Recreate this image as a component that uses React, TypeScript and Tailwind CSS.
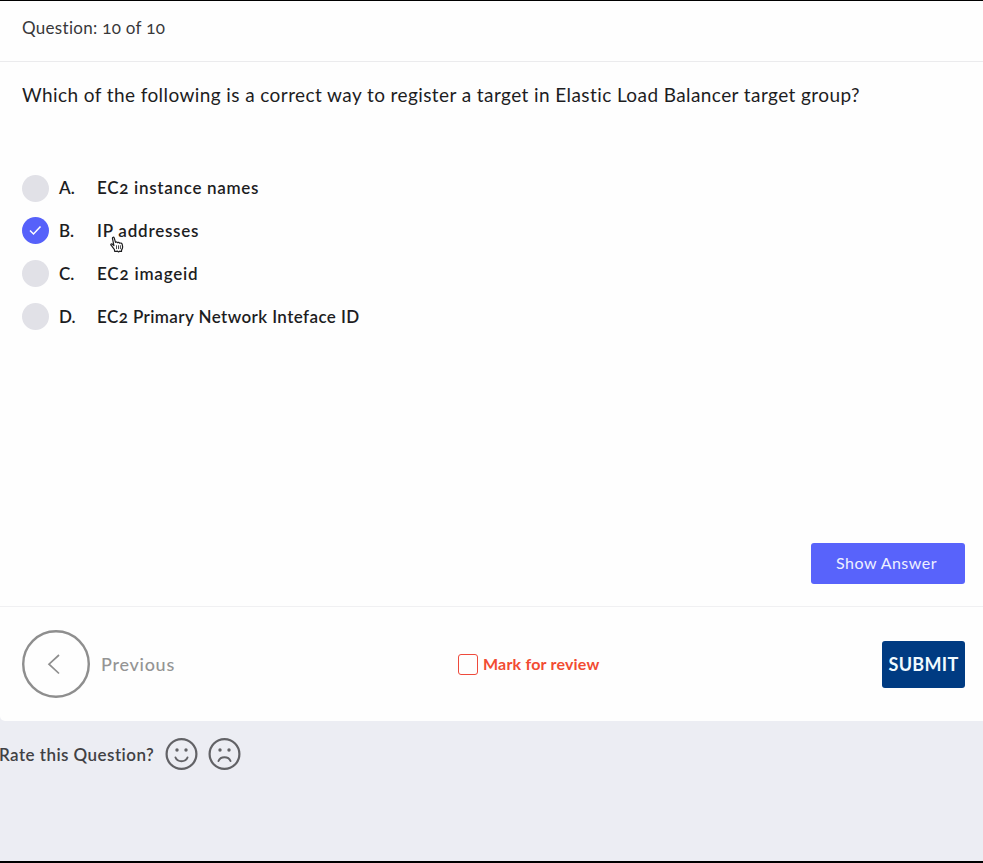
import type { ReactNode } from 'react';

const options = [
  { letter: 'A.', text: 'EC2 instance names', spacing: 'tracking-[0.7px]' },
  { letter: 'B.', text: 'IP addresses', spacing: 'tracking-[0.77px]' },
  { letter: 'C.', text: 'EC2 imageid', spacing: 'tracking-[0.8px]' },
  { letter: 'D.', text: 'EC2 Primary Network Inteface ID', spacing: 'tracking-[0.41px]' },
];

function PointerCursor() {
  return (
    <svg className="absolute left-[13px] top-[18px] h-[17px] w-[14px]" viewBox="0 0 14 17" fill="white" stroke="#1d1d1f" strokeWidth="1.2" strokeLinejoin="round" strokeLinecap="round">
      <path d="M4.8 15.5 4.3 13.4C3 12 2.2 10.5 1 9.2.4 8.2 1.6 7.5 2.5 8.2L3.9 9.5 2.5 2.6C2.2 1 3.8.7 4.3 2.1L5.5 6.3C6.2 5.7 7.2 6 7.5 6.7 8.3 6.1 9.3 6.4 9.6 7.2 10.5 6.7 12 7.1 12.2 8.4L12.6 10.7C12.8 12.1 12 13.1 11.6 14L11.5 15.5 9.7 15.1 8.6 16 7.3 15.1Z" />
      <path d="M6.5 9.7v3M8.5 9.7v3M10.4 9.7v3" strokeWidth=".8" />
    </svg>
  );
}

function Face({ children }: { children: ReactNode }) {
  return (
    <svg className="h-[33px] w-[33px]" viewBox="0 0 33 33" fill="none" stroke="#626266" strokeWidth="2" strokeLinecap="round">
      <circle cx="16.5" cy="16" r="14.9" strokeWidth="2.2" />
      <circle cx="12" cy="12" r="1.7" fill="#626266" stroke="none" />
      <circle cx="21" cy="12" r="1.7" fill="#626266" stroke="none" />
      {children}
    </svg>
  );
}

export default function App() {
  return (
    <div className="flex h-[863px] w-[983px] flex-col overflow-hidden border-b-2 border-t border-black bg-[#ecedf3] font-['Lato','Liberation_Sans',sans-serif] text-[#1d1d1f] oldstyle-nums">
      <main className="flex h-[720px] shrink-0 flex-col rounded-bl-[5px] bg-[#fefefe]">
        <header className="flex h-[61px] shrink-0 items-center border-b border-[#ebebed] pb-[6px] pl-[22px]">
          <span className="whitespace-nowrap text-[17px] leading-6 tracking-[0.3px] text-[#38383a]">Question: 10 of 10</span>
        </header>
        <section className="flex h-[545px] shrink-0 flex-col border-b border-[#f0f0f2] pl-[22px] pr-[18px]">
          <h1 className="mt-[19px] h-7 whitespace-nowrap text-[19px] leading-7 tracking-[0.41px]"><span>Which of the following is a correct way to register a target in Elastic Load Balancer target group?</span></h1>
          <div className="mt-[65.5px] flex flex-col gap-[15.8px]">
            {options.map((o) => (
              <div key={o.letter} className="flex h-[27px] items-center">
                <span className={`flex size-[27px] items-center justify-center rounded-full ${o.letter === 'B.' ? 'bg-[#5661fa]' : 'bg-[#e1e1e7]'}`}>
                  {o.letter === 'B.' && (
                    <svg className="h-[11px] w-[13px]" viewBox="0 0 13 11" fill="none" stroke="white" strokeWidth="1.5"><path d="M1 5.5 4.5 9 11.5 1.5" /></svg>
                  )}
                </span>
                <span className="ml-[10px] w-[38px] text-[17px] font-semibold">{o.letter}</span>
                <span className="relative">
                  <span className={`whitespace-nowrap text-[17px] font-semibold ${o.spacing}`}>{o.text}</span>
                  {o.letter === 'B.' && <PointerCursor />}
                </span>
              </div>
            ))}
          </div>
          <button className="mb-[22px] ml-auto mt-auto h-[41px] w-[154px] rounded-[3px] bg-[#5863fb] pb-[2px] pr-[3px] text-[16px] tracking-[0.48px] text-[#eef0ff]"><span>Show Answer</span></button>
        </section>
        <footer className="flex flex-1 items-center pl-[22px] pr-[18px]">
          <button className="flex w-[200px] items-center gap-[11px] text-[18px] font-medium tracking-[0.72px] text-[#949494]">
            <svg className="size-[68px]" viewBox="0 0 68 68" fill="none" stroke="#8e8e8e">
              <circle cx="34" cy="34" r="32.8" strokeWidth="2.4" />
              <path d="M37 25 27 34.2 37 43.5" strokeWidth="1.7" />
            </svg>
            <span>Previous</span>
          </button>
          <label className="ml-[236px] flex items-center gap-[5px] text-[16px] font-bold tracking-[0.2px] text-[#f24b32]">
            <span className="h-[21px] w-5 rounded-[3px] border border-[#ee4a3c]" />
            <span>Mark for review</span>
          </label>
          <button className="ml-auto h-[47px] w-[83px] shrink-0 rounded-[3px] bg-[#003b82] text-[18px] font-bold tracking-[0.3px] text-[#f1faff]"><span>SUBMIT</span></button>
        </footer>
      </main>
      <div className="mt-[16px] flex h-[34px] items-center text-[17px] font-semibold tracking-[0.45px] text-[#414144]">
        <span className="-ml-px w-[166px] whitespace-nowrap pt-[2px]">Rate this Question?</span>
        <Face><path d="M10.5 19.5c2 5 10 5 12 0" /></Face>
        <span className="w-[10px]" />
        <Face><path d="M10.5 23c2-5 10-5 12 0" /></Face>
      </div>
    </div>
  );
}
